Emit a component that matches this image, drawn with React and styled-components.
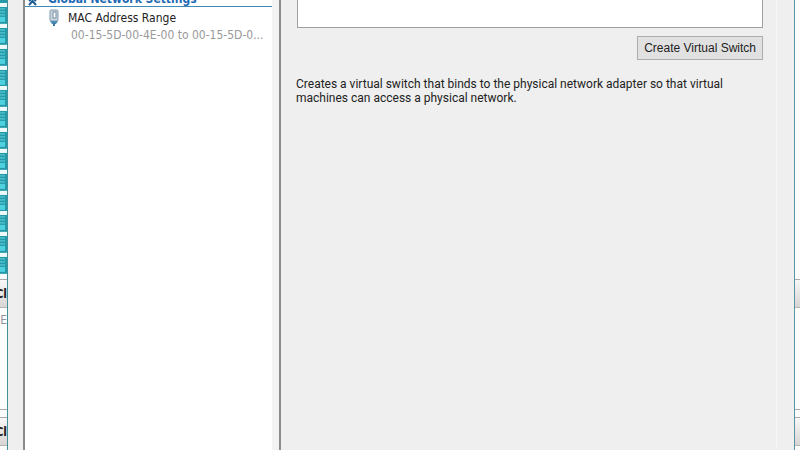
import React from "react";
import styled, { createGlobalStyle } from "styled-components";

const Global = createGlobalStyle`
  *, *::before, *::after { box-sizing: border-box; }
  html, body, #root { height: 100%; }
  body { margin: 0; overflow: hidden; background: #fff; color: #222;
    font: 12px/14px "DejaVu Sans Condensed", "DejaVu Sans", "Noto Sans", sans-serif; }
`;

const Desktop = styled.div`
  display: flex;
  height: 100%;
  min-height: 450px;
`;

const Behind = styled.div`
  display: flex;
  flex-direction: column;
  flex: none;
  width: ${(p) => p.$width};
  overflow: hidden;
  background: #fbfdfd;
`;

const IconList = styled.div`
  display: flex;
  flex-direction: column;
  height: 274px;
  background: #eefafa;
`;

const ServerIcon = styled.svg`
  display: block;
  flex: 1 1 0;
  width: 7px;
  min-height: 0;
`;

const FirstIcon = styled.svg`
  display: block;
  flex: none;
  width: 7px;
  height: 3px;
`;

const Spacer = styled.div`
  flex: none;
  height: ${(p) => p.$height};
`;

const PaneHeader = styled.div`
  display: flex;
  justify-content: flex-end;
  align-items: center;
  flex: none;
  height: 29px;
  border-top: 1px solid #aaa;
  border-bottom: 1px solid #b5b5b5;
  background: linear-gradient(#f8f8f8, #d8d5d3);
  color: #222;
  font-weight: bold;
`;

const PaneBody = styled.div`
  display: flex;
  justify-content: flex-end;
  flex: none;
  height: 102px;
  padding-top: 5px;
  border-bottom: 1px solid #aaa;
  color: #92929e;
`;

const Dialog = styled.main`
  display: flex;
  flex: 1;
  min-width: 0;
  border-left: 1px solid #42919a;
  border-right: 1px solid #5b93aa;
  background: #efefef;
`;

const Sidebar = styled.nav`
  flex: none;
  width: 249px;
  margin-left: 15px;
  border-left: 2px solid #8a8a8a;
  background: #fff;
`;

const SectionTitle = styled.h2`
  display: flex;
  gap: 11px;
  height: 7px;
  margin: 0;
  padding-left: 3px;
  border-bottom: 1px solid #3b8ab5;
  color: #1f6ab4;
  font-size: 12px;
  line-height: 14px;
  white-space: nowrap;
  overflow: hidden;
  align-items: flex-end;
`;

const Chevron = styled.svg`
  flex: none;
  width: 9px;
  height: 6px;
`;

const TreeItem = styled.a`
  display: flex;
  gap: 8px;
  padding: 4px 0 0 23px;
  color: inherit;
  text-decoration: none;
  white-space: nowrap;
`;

const AdapterIcon = styled.svg`
  flex: none;
  width: 12px;
  height: 18px;
  margin-top: -2px;
`;

const ItemDetail = styled.small`
  display: block;
  padding: 3px 0 0 3px;
  color: #999;
  font-size: 12px;
`;

const Splitter = styled.div`
  flex: none;
  width: 9px;
  border-right: 2px solid #8c8c8c;
  background: #f3f3f3;
`;

const Content = styled.section`
  display: flex;
  flex-direction: column;
  flex: 1;
  min-width: 0;
  padding: 0 13px 0 15px;
  margin-right: 17px;
  border-right: 1px solid #f5f5f5;
`;

const SwitchTypes = styled.div`
  height: 28px;
  margin-left: 1px;
  border: 1px solid #a0a0a0;
  border-top: 0;
  background: #fff;
`;

const ActionButton = styled.button`
  align-self: flex-end;
  height: 24px;
  margin: 8px 0 17px;
  padding: 0 6px;
  border: 1px solid #adadad;
  border-radius: 0;
  background: #e1e1e1;
  color: #222;
  font: 12px/14px "Liberation Sans", sans-serif;
`;

const Description = styled.p`
  max-width: 448px;
  margin: 0;
  font-family: Roboto, sans-serif;
`;

function Server() {
  return (
    <ServerIcon viewBox="0 0 7 21" preserveAspectRatio="none" aria-hidden="true">
      <rect y="4" width="7" height="17" fill="#249aa8" />
      <path d="M0 6h5M0 9h5M0 12h5" stroke="#62d5e0" />
      <rect y="14" width="5" height="5" fill="#4ed2df" />
    </ServerIcon>
  );
}

export default function App() {
  return (
    <Desktop>
      <Global />
      <Behind $width="7px">
        <IconList>
          <FirstIcon viewBox="0 0 7 3" aria-hidden="true">
            <rect width="7" height="3" fill="#249aa8" />
          </FirstIcon>
          {Array.from({ length: 13 }, (_, i) => <Server key={i} />)}
        </IconList>
        <Spacer $height="5px" />
        <PaneHeader>Cl</PaneHeader>
        <PaneBody>E</PaneBody>
        <Spacer $height="7px" />
        <PaneHeader>Cl</PaneHeader>
      </Behind>
      <Dialog>
        <Sidebar>
          <SectionTitle>
            <Chevron viewBox="0 0 9 6" aria-hidden="true">
              <path d="M1 1 4.500 -2 8 1M1 5 4.500 1 8 5" fill="none" stroke="#1f5c94" strokeWidth="2" />
            </Chevron>
            Global Network Settings
          </SectionTitle>
          <TreeItem href="#mac-address-range">
            <AdapterIcon viewBox="0 0 12 18" aria-hidden="true">
              <rect x="2" y="1" width="8" height="11" rx="1" fill="#c9d7e2" stroke="#8499ac" />
              <rect x="5" y="3" width="3" height="6" fill="#fff" stroke="#788da1" />
              <path d="M2 12h8l-2 3H4z" fill="#4b8db8" />
              <path d="M6 14v3" stroke="#3c789e" strokeWidth="2" />
            </AdapterIcon>
            <span>
              MAC Address Range
              <ItemDetail>00-15-5D-00-4E-00 to 00-15-5D-0...</ItemDetail>
            </span>
          </TreeItem>
        </Sidebar>
        <Splitter />
        <Content>
          <SwitchTypes />
          <ActionButton type="button">Create Virtual Switch</ActionButton>
          <Description>
            Creates a virtual switch that binds to the physical network adapter so that virtual
            machines can access a physical network.
          </Description>
        </Content>
      </Dialog>
      <Behind $width="5px">
        <Spacer $height="273px" />
        <Spacer $height="6px" />
        <PaneHeader />
        <PaneBody />
        <Spacer $height="7px" />
        <PaneHeader />
      </Behind>
    </Desktop>
  );
}
